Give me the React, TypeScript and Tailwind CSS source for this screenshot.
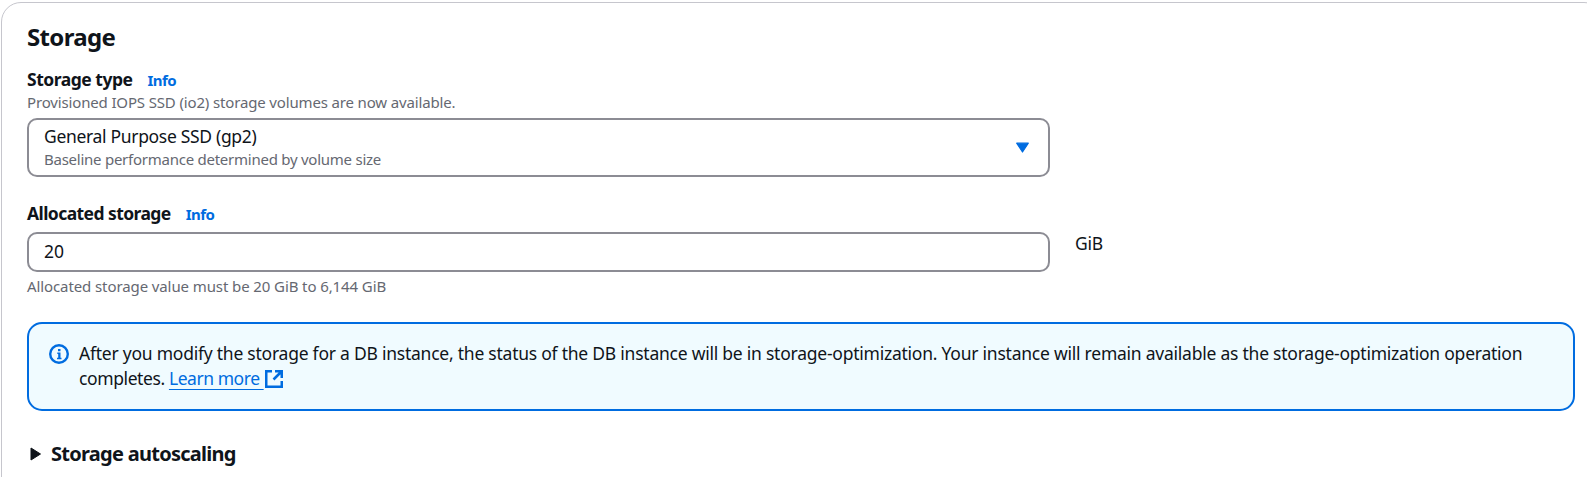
import type { ReactNode } from "react";

function FieldLabel({ children, tracking }: { children: ReactNode; tracking: string }) {
  return (
    <div className="flex h-[25px] items-baseline gap-[15px] whitespace-nowrap">
      <label className={`text-[17.5px] leading-[25px] font-bold ${tracking}`}>{children}</label>
      <a className="text-[15px] leading-[25px] font-bold tracking-[-0.55px] text-[#006ce0]">Info</a>
    </div>
  );
}

function InfoIcon() {
  return (
    <svg className="mt-[3px] size-5 shrink-0 text-[#006ce0]" viewBox="0 0 20 20" fill="none" stroke="currentColor" strokeWidth="2.4">
      <circle cx="10" cy="10" r="8.8" />
      <path d="M9 5h2.500v2.300H9zM8.300 8.500h3.200v5.300h1v1.400H8v-1.400h1.200V9.900h-.9z" fill="currentColor" stroke="none" />
    </svg>
  );
}

function ExternalIcon() {
  return (
    <svg className="ml-px inline-block size-[18px] shrink-0 align-[-3px] text-[#006ce0]" viewBox="0 0 18 18" fill="none" stroke="currentColor" strokeWidth="2.5">
      <path d="M7 1.250H1.250v15.500h15.500V11" />
      <path d="M10 1.250h6.750V8M16.500 1.500 8.500 9.500" />
    </svg>
  );
}

export default function App() {
  return (
    <main className="h-[477px] overflow-hidden bg-white pt-[2px] pl-px font-['Noto_Sans',sans-serif] text-[#0f141a]">
      <section className="h-[560px] w-[1603px] rounded-[20px] border border-[#c6c6cd] pt-[19px] pl-[25px]">
        <h2 className="text-[24px] leading-[30px] font-bold tracking-[-0.65px]">Storage</h2>

        <div className="mt-[15px] w-[1023px]">
          <FieldLabel tracking="tracking-[-0.48px]">Storage type</FieldLabel>
          <p className="text-[15px] leading-5 tracking-[-0.15px] text-[#656871]">
            <span>Provisioned IOPS SSD (io2) storage volumes are now available.</span>
          </p>
          <button className="mt-[6px] flex h-[59px] w-full items-center justify-between rounded-[10px] border-2 border-[#8c8c94] pr-[19px] pl-[15px] text-left">
            <span className="flex flex-col pb-[2px]">
              <span className="text-[17.5px] leading-[25px] tracking-[-0.32px]">General Purpose SSD (gp2)</span>
              <span className="text-[15px] leading-5 tracking-[-0.25px] text-[#656871]">Baseline performance determined by volume size</span>
            </span>
            <svg className="h-[11px] w-[13px] text-[#006ce0]" viewBox="0 0 13 11" fill="currentColor" stroke="currentColor" strokeLinejoin="round" strokeWidth="1.2">
              <path d="M.7 1.200h11.600L6.500 10z" />
            </svg>
          </button>
        </div>

        <div className="mt-6">
          <FieldLabel tracking="tracking-[-0.57px]">Allocated storage</FieldLabel>
          <div className="mt-[6px] flex items-start">
            <input
              className="h-10 w-[1023px] rounded-[10px] border-2 border-[#8c8c94] px-[15px] pb-[2px] text-[17.5px] tracking-[0.1px] outline-none"
              defaultValue="20"
            />
            <span className="-mt-px ml-[25px] text-[17.5px] leading-[25px] tracking-[-0.3px]">GiB</span>
          </div>
          <p className="mt-1 text-[15px] leading-5 tracking-[-0.1px] text-[#656871]">
            <span>Allocated storage value must be 20 GiB to 6,144 GiB</span>
          </p>
        </div>

        <div className="mt-[26px] flex h-[89px] w-[1548px] gap-[10px] rounded-[15px] border-2 border-[#006ce0] bg-[#f0fbff] pt-[17px] pl-5">
          <InfoIcon />
          <p className="text-[17.5px] leading-[25px] tracking-[-0.237px] whitespace-nowrap">
            <span>
              After you modify the storage for a DB instance, the status of the DB instance will be in storage-optimization. Your instance will remain available as the storage-optimization operation
            </span>
            <br />
            <span className="tracking-[-0.4px]">completes. </span>
            <a className="tracking-[-0.45px] text-[#006ce0]">
              <span className="underline decoration-1 underline-offset-4">Learn more&nbsp;</span>
              <ExternalIcon />
            </a>
          </p>
        </div>

        <div className="mt-[30px] flex items-center gap-[10px] pl-[3px]">
          <svg className="mt-px h-[14px] w-[11px]" viewBox="0 0 11 14" fill="currentColor" stroke="currentColor" strokeLinejoin="round">
            <path d="M1 1v12l9.500-6z" />
          </svg>
          <h3 className="text-[20px] leading-[25px] font-bold tracking-[-0.73px]">Storage autoscaling</h3>
        </div>
      </section>
    </main>
  );
}
